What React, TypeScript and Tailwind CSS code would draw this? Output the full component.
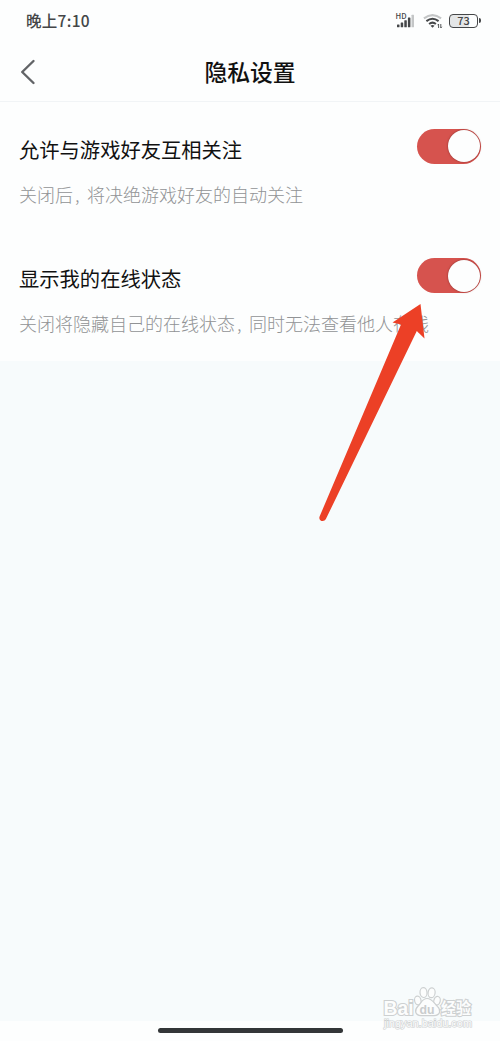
import React from 'react';

interface Setting {
  id: string;
  title: string;
  hint: string[];
}

const SETTINGS: Setting[] = [
  {
    id: 'follow',
    title: '允许与游戏好友互相关注',
    hint: ['关闭后', '将决绝游戏好友的自动关注'],
  },
  {
    id: 'online',
    title: '显示我的在线状态',
    hint: ['关闭将隐藏自己的在线状态', '同时无法查看他人在线'],
  },
];

const StatusBar: React.FC = () => (
  <div className="flex h-10 items-center justify-between pl-[26px] pr-[19px] text-[#444648]">
    <span className="pt-0.5 text-[15.5px] leading-none font-medium tracking-[0.3px]">晚上7:10</span>
    <div className="flex items-center pt-px">
      {/* Signal */}
      <svg width="21" height="20" viewBox="0 0 21 20" className="mr-[7px]">
        <text x="0.5" y="7.5" fontSize="7.5" fontWeight="500" fill="#444648" textLength="11" lengthAdjust="spacingAndGlyphs">HD</text>
        <g fill="#444648">
          <rect x="2" y="13.4" width="2.5" height="2.8" rx="0.5" />
          <rect x="5.7" y="11.6" width="2.5" height="4.6" rx="0.5" />
          <rect x="9.3" y="9.3" width="2.5" height="6.9" rx="0.5" />
          <rect x="12.9" y="6.6" width="2.5" height="9.6" rx="0.5" />
        </g>
        <rect x="16.5" y="3.8" width="2.5" height="12.4" rx="0.5" fill="#c4c6c7" />
      </svg>
      {/* Wifi */}
      <svg width="20" height="18" viewBox="0 0 20 18" fill="none" strokeWidth="2" className="mr-[6px]">
        <path d="M0.9 6.4Q9.5 -0.2 18.1 6.4" stroke="#c4c6c7" />
        <path d="M3.4 9.1Q9.5 4.3 15.6 9.1" stroke="#444648" />
        <path d="M6.1 12Q9.5 9.3 12.9 12" stroke="#444648" />
        <path d="M7.5 13.7Q9.5 12.2 11.5 13.7L9.5 15.8Z" fill="#444648" />
        <path d="M15.6 16v-4l-1 1.2M17.8 12v4l1-1.2" stroke="#444648" strokeWidth="0.9" />
      </svg>
      {/* Battery */}
      <div className="flex h-[14px] w-[29px] items-center justify-center rounded-[4px] border-[1.5px] border-[#444648] bg-[linear-gradient(to_right,#e4e6e7_70%,transparent_70%)]">
        <span className="text-[11px] leading-none font-medium">73</span>
      </div>
      <div className="ml-px h-[5px] w-[2px] rounded-r-sm bg-[#444648]" />
    </div>
  </div>
);

const NavBar: React.FC = () => (
  <div className="flex h-[62px] items-center border-b border-[#f1f4f6] px-5">
    <svg width="16" height="26" viewBox="0 0 16 26" fill="none" className="mt-[3px]">
      <path d="M13.5 2L2.2 13L13.5 24" stroke="#626467" strokeWidth="2.4" strokeLinecap="round" strokeLinejoin="round" />
    </svg>
    <h1 className="flex-1 pt-1 pr-4 text-center text-[22.8px] leading-none font-medium text-[#111]">隐私设置</h1>
  </div>
);

const Toggle: React.FC = () => (
  <button className="flex h-[35px] w-16 shrink-0 items-center justify-end rounded-full bg-[#d6534e] pr-px" role="switch" aria-checked="true">
    <span className="size-8 rounded-full bg-[#fdfefe] shadow-[0_0_2px_rgba(90,20,20,0.7)]" />
  </button>
);

const SettingRow: React.FC<{ setting: Setting }> = ({ setting }) => (
  <div className="flex h-[129.5px] items-start justify-between pt-[26.5px] pr-[19px] pl-[19px]">
    <div className="whitespace-nowrap">
      <h2 className="mt-1 h-8 text-[20.3px] leading-8 text-[#111]">{setting.title}</h2>
      <p className="mt-[14px] -mr-20 flex h-[30px] text-[18px] leading-[30px] font-light text-[#919395]">
        <span>{setting.hint[0]}</span>
        <span className="w-[14px] pl-0.5">,</span>
        <span>{setting.hint[1]}</span>
      </p>
    </div>
    <Toggle />
  </div>
);

const Pointer: React.FC = () => (
  <svg width="120" height="224" viewBox="0 0 120 224" className="absolute top-[300px] left-[312px]">
    <path d="M108.5 4L80.5 22.5L89 24.5L7.6 216.5C6 220.8 12 223 14 218.8L104.8 31L112.5 38.5Z" fill="#ec4026" />
  </svg>
);

const Watermark: React.FC = () => (
  <svg
    width="98"
    height="48"
    viewBox="0 0 98 48"
    className="absolute right-[22px] bottom-[9px]"
    fill="#fcfdfd"
    stroke="#cdd0d1"
    strokeWidth="1.2"
  >
    <g fontFamily="'Liberation Sans', 'Noto Sans CJK SC', sans-serif" paintOrder="stroke" strokeWidth="2.2">
      <text x="3.5" y="30.5" fontSize="19.5" fontWeight="700" textLength="30" lengthAdjust="spacingAndGlyphs">Bai</text>
      <text x="61" y="29.5" fontSize="15.5" fontWeight="700" textLength="30" lengthAdjust="spacingAndGlyphs">经验</text>
      <text x="4" y="43" fontSize="10.5" textLength="88" lengthAdjust="spacingAndGlyphs" strokeWidth="1.2">jingyan.baidu.com</text>
    </g>
    <g>
      <ellipse cx="37.8" cy="16.5" rx="3.2" ry="4.4" transform="rotate(-12 37.8 16.5)" />
      <ellipse cx="43.5" cy="8.6" rx="3.5" ry="4.9" transform="rotate(-4 43.5 8.6)" />
      <ellipse cx="51.6" cy="8.8" rx="3.5" ry="4.9" transform="rotate(8 51.6 8.8)" />
      <ellipse cx="57" cy="16.8" rx="3.2" ry="4.4" transform="rotate(14 57 16.8)" />
      <path d="M47 14.5C42 14.5 41.4 19 38 22.2C34 26 35 31.4 41 31.6C45 31.7 49.5 31.7 54 31.6C60.5 31.4 61.2 26 57.4 22.4C54 19 52 14.5 47 14.5Z" />
    </g>
    <text x="39.5" y="29.5" fontSize="13" fontWeight="700" fontFamily="'Liberation Sans', sans-serif" fill="#c9cccd" stroke="none" textLength="15" lengthAdjust="spacingAndGlyphs">du</text>
  </svg>
);

const App: React.FC = () => {
  return (
    <div className="relative flex h-[1041px] w-[500px] flex-col overflow-hidden bg-[#f7fbfc] font-['Noto_Sans_CJK_SC',sans-serif]">
      <header className="bg-[#fdfefe]">
        <StatusBar />
        <NavBar />
      </header>
      <main className="flex-1">
        <div className="bg-[#fdfefe]">
          {SETTINGS.map((setting) => (
            <SettingRow key={setting.id} setting={setting} />
          ))}
        </div>
      </main>
      {/* Home indicator */}
      <footer className="flex h-5 justify-center bg-[#fdfefe] pt-[7px]">
        <div className="h-[5px] w-[185px] rounded-full bg-[#333638]" />
      </footer>
      <Pointer />
      <Watermark />
    </div>
  );
};

export default App;
